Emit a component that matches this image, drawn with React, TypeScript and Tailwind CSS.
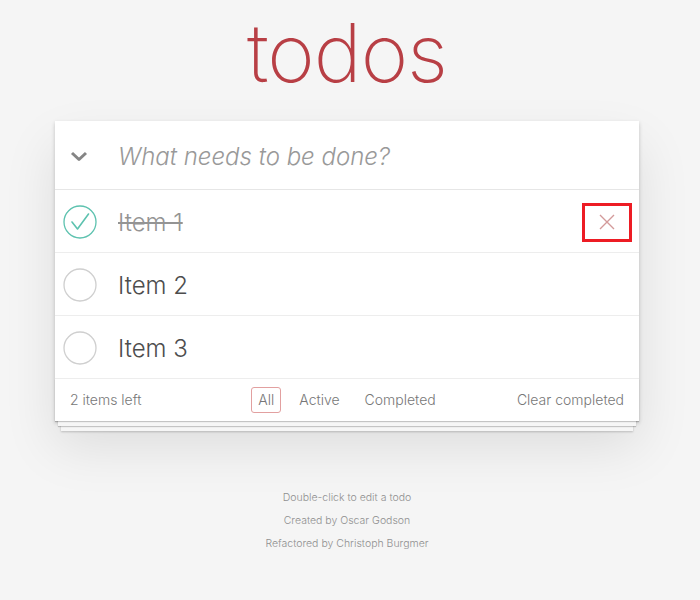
import React from 'react';

type Todo = { id: number; title: string; completed: boolean };

const todos: Todo[] = [
  { id: 1, title: 'Item 1', completed: true },
  { id: 2, title: 'Item 2', completed: false },
  { id: 3, title: 'Item 3', completed: false },
];

const Toggle: React.FC<{ checked: boolean }> = ({ checked }) => (
  <svg width="34" height="34" viewBox="0 0 34 34" className="shrink-0">
    <circle cx="17" cy="17" r="16" fill="none" stroke={checked ? '#5dc2af' : '#cfcfcf'} strokeWidth="1.3" />
    {checked && (
      <path d="M9 17 L14.5 24 L25.5 9" fill="none" stroke="#5dc2af" strokeWidth="1.6" strokeLinecap="round" strokeLinejoin="round" />
    )}
  </svg>
);

const App: React.FC = () => {
  const left = todos.filter((t) => !t.completed).length;

  return (
    <div className="min-h-[600px] pr-[6px] bg-[#f5f5f5] flex flex-col items-center font-['Inter',sans-serif] font-light text-[#4d4d4d]">
      <h1 className="pt-[13px] text-[81px] leading-none font-extralight text-[#b83f45] tracking-[-1px]">todos</h1>

      <section className="mt-[27px] w-[584px] bg-white shadow-[0_2px_4px_rgba(0,0,0,0.2),0_25px_50px_rgba(0,0,0,0.1)]">
        <header className="h-[69px] flex items-center border-b border-[#e6e6e6]">
          <div className="w-[63px] pl-[15px] pt-[3px] flex">
            <svg width="18" height="11" viewBox="0 0 18 11">
              <path d="M2 2 L9 8.5 L16 2" fill="none" stroke="#858585" strokeWidth="3" strokeLinejoin="round" />
            </svg>
          </div>
          <span className="mt-[4px] text-[24px] italic text-[#999]">What needs to be done?</span>
        </header>

        <ul>
          {todos.map((t) => (
            <li key={t.id} className="h-[63px] flex items-center border-b border-[#ededed]">
              <div className="w-[63px] pl-[8px] pt-[2px] flex items-center">
                <Toggle checked={t.completed} />
              </div>
              <span className={`mt-[4px] flex-1 text-[24px] ${t.completed ? 'line-through text-[#949494]' : 'text-[#4d4d4d]'}`}>
                {t.title}
              </span>
              {t.completed && (
                <div className="mr-[7px] mt-[2px] w-[50px] h-[39px] border-[3px] border-[#ed1c24] flex items-center justify-center">
                  <svg width="16" height="16" viewBox="0 0 16 16">
                    <path d="M1 1 L15 15 M15 1 L1 15" stroke="#d39a9a" strokeWidth="1.4" />
                  </svg>
                </div>
              )}
            </li>
          ))}
        </ul>

        <footer className="h-[42px] px-[15px] pb-[1px] flex items-center text-[14px] text-[#777] shadow-[0_1px_1px_rgba(0,0,0,0.2),0_8px_0_-3px_#f6f6f6,0_9px_1px_-3px_rgba(0,0,0,0.2),0_16px_0_-6px_#f6f6f6,0_17px_2px_-6px_rgba(0,0,0,0.2)]">
          <span className="flex-1">{left} items left</span>
          <div className="flex items-center gap-[11px]">
            <span className="h-[26px] px-[6px] flex items-center rounded-[3px] border border-[#e2a0a0]">All</span>
            <span className="h-[26px] px-[6px] flex items-center border border-transparent">Active</span>
            <span className="h-[26px] px-[6px] flex items-center border border-transparent">Completed</span>
          </div>
          <span className="flex-1 text-right">Clear completed</span>
        </footer>
      </section>

      <div className="mt-[70px] flex flex-col items-center gap-[10px] text-[10.5px] leading-[13px] text-[#8f8f8f]">
        <p>Double-click to edit a todo</p>
        <p>Created by Oscar Godson</p>
        <p>Refactored by Christoph Burgmer</p>
      </div>
    </div>
  );
};

export default App;
